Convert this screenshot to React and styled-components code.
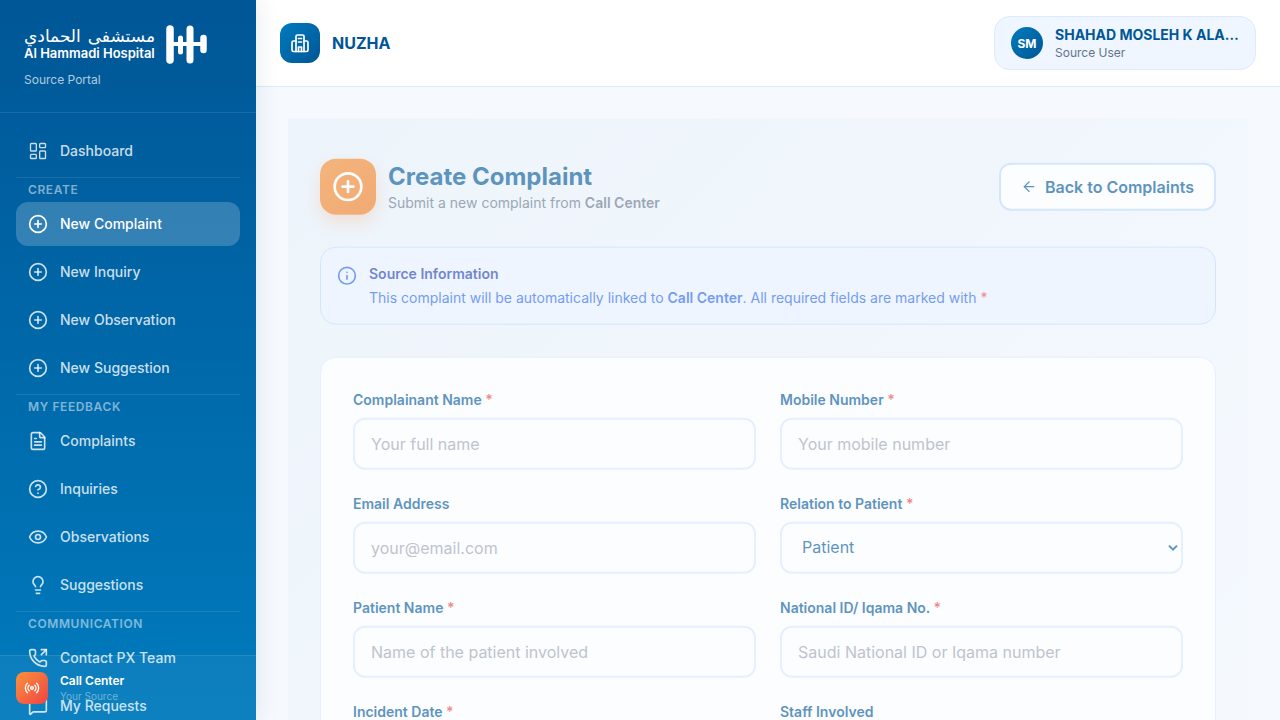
import React from "react";
import styled, { createGlobalStyle } from "styled-components";
import {
  LayoutDashboard, CirclePlus, FileText, CircleHelp, Eye, Lightbulb, PhoneOutgoing,
  MessageSquare, Radio, ArrowLeft, Info,
} from "lucide-react";

const Global = createGlobalStyle`
  html, body { margin: 0; height: 100%; overflow: hidden; }
  body { font-family: Inter, "Liberation Sans", sans-serif; }
  * { box-sizing: border-box; }
`;
const Shell = styled.div`display: flex; width: 1280px; height: 720px; overflow: hidden;`;
const Side = styled.aside`
  position: relative; z-index: 2; width: 256px; flex: none; height: 720px; color: #fff;
  background: linear-gradient(180deg, #005696 0%, #007bbd 100%);
  box-shadow: 4px 0 20px rgba(0,40,80,.08);
`;
const SideClip = styled.div`position: relative; height: 100%; overflow: hidden;`;
const Brand = styled.div`padding: 25px 24px 0; height: 113px; border-bottom: 1px solid rgba(255,255,255,.1);`;
const LogoRow = styled.div`display: flex; align-items: center; gap: 11px; height: 38px;`;
const LogoText = styled.div`display: flex; flex-direction: column; width: 131px; color: #fff;`;
const LogoAr = styled.div`font: 400 17px/18px "DejaVu Sans", sans-serif; direction: rtl; white-space: nowrap; text-align: justify; text-align-last: justify;`;
const LogoEn = styled.div`font: 600 13px/16px Inter, sans-serif; white-space: nowrap;`;
const Portal = styled.div`margin-top: 9px; font-size: 12px; line-height: 16px; color: rgba(255,255,255,.7);`;
const Nav = styled.nav`padding: 16px 16px 0; display: flex; flex-direction: column;`;
const Item = styled.div`
  display: flex; align-items: center; gap: 12px; height: 44px; padding: 0 12px; margin-bottom: 4px;
  border-radius: 12px; font-size: 14px; font-weight: 500; line-height: 20px;
  color: ${p => (p.$active ? "#fff" : "rgba(255,255,255,.8)")};
  background: ${p => (p.$active ? "rgba(255,255,255,.2)" : "transparent")};
  svg { flex: none; }
`;
const Group = styled.div`
  border-top: 1px solid rgba(255,255,255,.1); padding: 4px 12px; height: 25px;
  font-size: 12px; line-height: 16px; font-weight: 600; letter-spacing: .6px; text-transform: uppercase;
  color: rgba(255,255,255,.5);
`;
const Source = styled.div`
  position: absolute; left: 0; right: 0; bottom: 0; height: 65px; padding: 16px 16px 0;
  display: flex; gap: 12px; background: rgba(255,255,255,.05); border-top: 1px solid rgba(255,255,255,.1);
`;
const SourceIcon = styled.div`
  width: 32px; height: 32px; border-radius: 8px; display: grid; place-items: center; color: #fff;
  background: linear-gradient(135deg, #fb923c, #ef4444);
`;
const SourceName = styled.div`font-size: 12px; line-height: 16px; font-weight: 600; color: #fff; margin-top: 1px;`;
const SourceSub = styled.div`font-size: 10px; line-height: 14px; color: rgba(255,255,255,.4);`;

const Right = styled.div`flex: 1; min-width: 0; display: flex; flex-direction: column; background: #f6faff;`;
const Top = styled.header`
  height: 87px; flex: none; display: flex; align-items: center; justify-content: space-between;
  padding: 0 24px; background: #fff; border-bottom: 1px solid #dbeafe;
`;
const Org = styled.div`display: flex; align-items: center; gap: 12px;`;
const OrgIcon = styled.div`
  width: 40px; height: 40px; border-radius: 12px; display: grid; place-items: center; color: #fff;
  background: linear-gradient(135deg, #007bbd, #005696);
`;
const OrgName = styled.div`font-size: 16px; font-weight: 700; line-height: 24px; color: #005696;`;
const User = styled.div`
  display: flex; align-items: center; gap: 12px; width: 262px; height: 54px; padding: 0 16px;
  background: #eff6ff; border: 1px solid #dbeafe; border-radius: 16px;
`;
const Avatar = styled.div`
  width: 32px; height: 32px; border-radius: 50%; flex: none; display: grid; place-items: center;
  color: #fff; font-size: 12px; font-weight: 700; background: linear-gradient(135deg, #007bbd, #005696);
`;
const UserText = styled.div`min-width: 0; flex: 1;`;
const UserName = styled.div`
  font-size: 14px; line-height: 20px; font-weight: 700; color: #005696;
  white-space: nowrap; overflow: hidden; text-overflow: ellipsis;
`;
const UserRole = styled.div`font-size: 12px; line-height: 16px; color: #64748b;`;
const Main = styled.main`flex: 1; min-height: 0; overflow: hidden; padding: 32px;`;
const Page = styled.div`
  opacity: .62; padding: 40px 32px 32px; transform: translateY(-.35px);
  background: linear-gradient(135deg, #e8f1f9 0%, #f6faff 100%);
`;
const Head = styled.div`display: flex; align-items: center; justify-content: space-between; margin-bottom: 32px;`;
const HeadLeft = styled.div`display: flex; align-items: center; gap: 12px;`;
const HeadIcon = styled.div`
  width: 56px; height: 56px; border-radius: 16px; display: grid; place-items: center; color: #fff;
  background: linear-gradient(135deg, #f48b2c, #ee7a20); box-shadow: 0 8px 16px rgba(249,115,22,.25);
`;
const Title = styled.h1`margin: 0; font-size: 24px; line-height: 32px; font-weight: 700; color: #005696;`;
const Sub = styled.p`margin: 0; font-size: 14px; line-height: 20px; color: #64748b; b { font-weight: 600; }`;
const Back = styled.button`
  display: flex; align-items: center; gap: 8px; height: 48px; padding: 0 20px; background: #fff;
  border: 2px solid #bfdbfe; border-radius: 12px; font: 600 16px/24px Inter, sans-serif; color: #005696;
`;
const Notice = styled.div`
  display: flex; gap: 12px; padding: 16px; height: 78px; margin-bottom: 32px;
  background: #eaf3ff; border: 1px solid #bfdbfe; border-radius: 16px; color: #2563eb;
  svg { flex: none; margin-top: 2px; }
`;
const NoticeTitle = styled.div`font-size: 14px; line-height: 20px; font-weight: 600; color: #1e40af; margin-bottom: 4px;`;
const NoticeText = styled.div`font-size: 14px; line-height: 20px; b { font-weight: 600; }`;
const Req = styled.span`color: #ef4444;`;
const Card = styled.section`
  display: grid; grid-template-columns: 1fr 1fr; gap: 24px; padding: 32px;
  background: #fff; border: 1px solid #dbeafe; border-radius: 16px;
`;
const Field = styled.label`display: block;`;
const Label = styled.div`font-size: 14px; line-height: 20px; font-weight: 600; color: #005696; margin-bottom: 8px;`;
const Input = styled.input`
  display: block; width: 100%; height: 52px; padding: 0 16px; border: 2px solid #dbeafe; border-radius: 12px;
  font: 400 16px Inter, sans-serif; color: #005696; background: #fff; outline: none;
  &::placeholder { color: #9ca3af; }
`;
const Select = styled.select`
  display: block; width: 100%; height: 52px; padding: 0 16px 2px; border: 2px solid #dbeafe; border-radius: 12px;
  font: 400 16px Inter, sans-serif; color: #005696; background: #fff; outline: none;
`;

const LogoMark = () => (
  <svg width="43" height="39" viewBox="0 0 43 39" fill="none" stroke="#fff" strokeLinecap="round">
    <path d="M4 4V35" strokeWidth="7.5" />
    <path d="M14.5 13V27" strokeWidth="5" />
    <path d="M24 4V35" strokeWidth="7" />
    <path d="M37.5 13V25" strokeWidth="6.5" />
    <path d="M4 19H38" strokeWidth="4" />
  </svg>
);

const OrgGlyph = () => (
  <svg width="20" height="20" viewBox="0 0 20 20" fill="none" stroke="currentColor" strokeWidth="1.7" strokeLinecap="round" strokeLinejoin="round">
    <path d="M6 18.5V3.5a1.5 1.5 0 0 1 1.5-1.5h5A1.5 1.5 0 0 1 14 3.5v15" />
    <path d="M6 8H3.5A1.5 1.5 0 0 0 2 9.5V17a1.5 1.5 0 0 0 1.5 1.5h13A1.5 1.5 0 0 0 18 17V9.5A1.5 1.5 0 0 0 16.500 8H14" />
    <path d="M8.500 5.500h3M8.500 9h3M8.500 18.500V14h3v4.500" />
  </svg>
);

const navA = [[CirclePlus, "New Complaint", true], [CirclePlus, "New Inquiry"], [CirclePlus, "New Observation"], [CirclePlus, "New Suggestion"]];
const navB = [[FileText, "Complaints"], [CircleHelp, "Inquiries"], [Eye, "Observations"], [Lightbulb, "Suggestions"]];
const navC = [[PhoneOutgoing, "Contact PX Team"], [MessageSquare, "My Requests"]];
const renderItems = list => list.map(([I, t, a]) => (
  <Item key={t} $active={a}><I size={20} strokeWidth={2} />{t}</Item>
));
const F = ({ label, req, ph }) => (
  <Field>
    <Label>{label}{req && <Req> *</Req>}</Label>
    <Input placeholder={ph} />
  </Field>
);

export default function App() {
  return (
    <Shell>
      <Global />
      <Side>
        <SideClip>
          <Brand>
            <LogoRow>
              <LogoText>
                <LogoAr>مستشفى الحمادي</LogoAr>
                <LogoEn>Al Hammadi Hospital</LogoEn>
              </LogoText>
              <LogoMark />
            </LogoRow>
            <Portal>Source Portal</Portal>
          </Brand>
          <Nav>
            <Item><LayoutDashboard size={20} strokeWidth={1.6} />Dashboard</Item>
            <Group>Create</Group>
            {renderItems(navA)}
            <Group>My Feedback</Group>
            {renderItems(navB)}
            <Group>Communication</Group>
            {renderItems(navC)}
          </Nav>
          <Source>
            <SourceIcon><Radio size={16} /></SourceIcon>
            <div>
              <SourceName>Call Center</SourceName>
              <SourceSub>Your Source</SourceSub>
            </div>
          </Source>
        </SideClip>
      </Side>
      <Right>
        <Top>
          <Org>
            <OrgIcon><OrgGlyph /></OrgIcon>
            <OrgName>NUZHA</OrgName>
          </Org>
          <User>
            <Avatar>SM</Avatar>
            <UserText>
              <UserName>SHAHAD MOSLEH K ALANAZI</UserName>
              <UserRole>Source User</UserRole>
            </UserText>
          </User>
        </Top>
        <Main>
          <Page>
            <Head>
              <HeadLeft>
                <HeadIcon><CirclePlus size={32} /></HeadIcon>
                <div>
                  <Title>Create Complaint</Title>
                  <Sub>Submit a new complaint from <b>Call Center</b></Sub>
                </div>
              </HeadLeft>
              <Back><ArrowLeft size={16} />Back to Complaints</Back>
            </Head>
            <Notice>
              <Info size={20} />
              <div>
                <NoticeTitle>Source Information</NoticeTitle>
                <NoticeText>This complaint will be automatically linked to <b>Call Center</b>. All required fields are marked with <Req>*</Req></NoticeText>
              </div>
            </Notice>
            <Card>
              <F label="Complainant Name" req ph="Your full name" />
              <F label="Mobile Number" req ph="Your mobile number" />
              <F label="Email Address" ph="your@email.com" />
              <Field>
                <Label>Relation to Patient<Req> *</Req></Label>
                <Select defaultValue="Patient"><option>Patient</option></Select>
              </Field>
              <F label="Patient Name" req ph="Name of the patient involved" />
              <F label="National ID/ Iqama No." req ph="Saudi National ID or Iqama number" />
              <F label="Incident Date" req ph="" />
              <F label="Staff Involved" ph="" />
            </Card>
          </Page>
        </Main>
      </Right>
    </Shell>
  );
}
